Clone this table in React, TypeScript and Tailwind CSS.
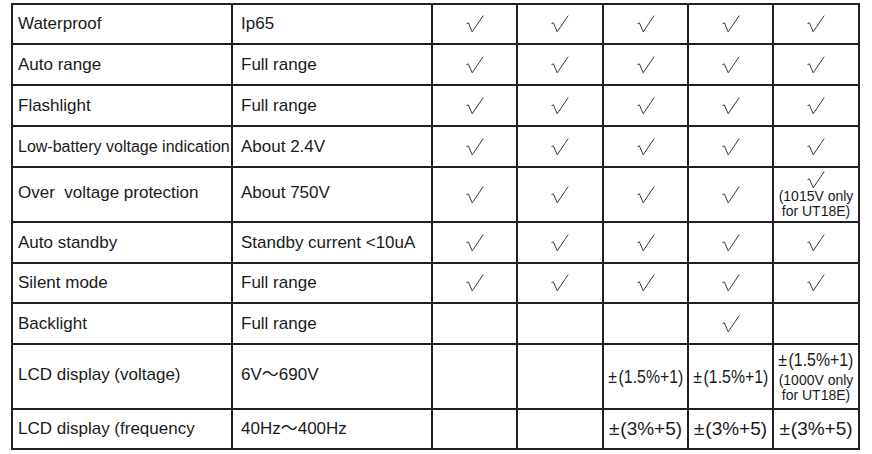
import React from "react";

const Check = () => (
  <svg width="18" height="18" viewBox="0 0 18 18" className="block">
    <path d="M0.5 8.6 L2.4 7.9 L6.2 16.8 L17.2 0.6" fill="none" stroke="#3a3a3a" strokeWidth="1" strokeLinejoin="round" />
  </svg>
);

type Cell = React.ReactNode;

const heights = ["h-[38px]", "h-[39px]", "h-[39px]", "h-[39px]", "h-[53px]", "h-[39px]", "h-[38px]", "h-[39px]", "h-[63px]", "h-[38px]"];

const C = () => <Check />;

const Note = ({ a }: { a: string }) => (
  <div className="text-[14px] leading-[15px] text-center">
    <div>{a}</div>
    <div>for UT18E)</div>
  </div>
);

const P15 = () => (
  <span className="whitespace-nowrap flex shrink-0 items-center leading-[20px] text-[18px] scale-x-[0.88]">
    <span className="mr-[2px]">±</span>
    <span>(1.5%+1)</span>
  </span>
);

const P35 = () => (
  <span className="whitespace-nowrap flex items-center text-[19px] leading-[22px]">
    <span className="mr-[1px]">±</span>
    <span>(3%+5)</span>
  </span>
);

const rows: { label: string; value: string; cells: Cell[]; small?: boolean; lift?: boolean }[] = [
  { label: "Waterproof", value: "Ip65", cells: [<C />, <C />, <C />, <C />, <C />] },
  { label: "Auto range", value: "Full range", cells: [<C />, <C />, <C />, <C />, <C />] },
  { label: "Flashlight", value: "Full range", cells: [<C />, <C />, <C />, <C />, <C />] },
  { label: "Low-battery voltage indication", value: "About 2.4V", cells: [<C />, <C />, <C />, <C />, <C />], small: true },
  {
    label: "Over  voltage protection",
    value: "About 750V",
    lift: true,
    cells: [
      <C />,
      <C />,
      <C />,
      <C />,
      <div className="flex flex-col items-center">
        <Check />
        <Note a="(1015V only" />
      </div>,
    ],
  },
  { label: "Auto standby", value: "Standby current <10uA", cells: [<C />, <C />, <C />, <C />, <C />] },
  { label: "Silent mode", value: "Full range", cells: [<C />, <C />, <C />, <C />, <C />] },
  { label: "Backlight", value: "Full range", cells: [null, null, null, <C />, null] },
  {
    label: "LCD display (voltage)",
    value: "6V～690V",
    lift: true,
    cells: [
      null,
      null,
      <P15 />,
      <P15 />,
      <div className="flex flex-col items-center">
        <P15 />
        <div className="mt-[3px]">
          <Note a="(1000V only" />
        </div>
      </div>,
    ],
  },
  {
    label: "LCD display (frequency",
    value: "40Hz～400Hz",
    cells: [null, null, <P35 />, <P35 />, <P35 />],
  },
];

export default function App() {
  return (
    <div
      className="w-[872px] h-[454px] bg-white overflow-hidden pt-[3px] pl-[11px] text-[#1a1a1a] text-[17px]"
      style={{ fontFamily: '"Liberation Sans", Arial, "Noto Sans CJK SC", sans-serif' }}
    >
      <div className="inline-grid grid-cols-[218px_198px_83px_84px_83px_83px_84px] gap-[2px] p-[2px] bg-[#202020]">
        {rows.map((r, i) => (
          <React.Fragment key={i}>
            <div className={`bg-white flex items-center pl-[5px] whitespace-pre ${r.small ? "text-[16px]" : ""} ${r.lift ? "pb-[3px]" : ""} ${heights[i]}`}>{r.label}</div>
            <div className={`bg-white flex items-center pl-[8px] whitespace-pre ${r.lift ? "pb-[3px]" : ""} ${heights[i]}`}>{r.value}</div>
            {r.cells.map((c, j) => (
              <div key={j} className={`bg-white flex items-center justify-center ${heights[i]}`}>
                {c}
              </div>
            ))}
          </React.Fragment>
        ))}
      </div>
    </div>
  );
}
